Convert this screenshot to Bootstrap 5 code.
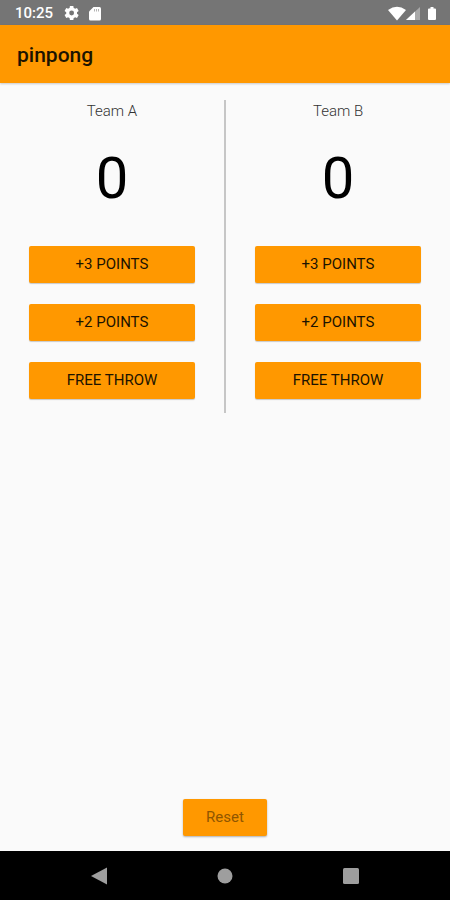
<!DOCTYPE html>
<html lang="en">
<head>
<meta charset="utf-8">
<meta name="viewport" content="width=device-width, initial-scale=1">
<title>pinpong</title>
<link href="https://cdn.jsdelivr.net/npm/bootstrap@5.3.0/dist/css/bootstrap.min.css" rel="stylesheet">
<style>
  body { font-family: Roboto, sans-serif; background: #fafafa; color: #000; }
  .status-bar { background: #757575; color: #fff; height: 25px; padding: 1px 14px 0 15px; font-size: 15px; font-weight: 500; line-height: 24px; }
  .status-bar svg, .sys-nav svg { display: block; }
  .app-bar { background: #ff9800; height: 58px; padding: 2px 17px 0; box-shadow: 0 1px 2px rgba(0,0,0,.2); }
  .app-title { font-size: 21px; font-weight: 500; line-height: 24px; color: #1c1300; }
  .board { padding-top: 17px; }
  .team { padding: 0 29px 14px; }
  .team-name { font-size: 15px; font-weight: 300; line-height: 22px; color: #333; }
  .score { font-size: 58px; line-height: 68px; margin: 22px 0 34px; }
  .rule { width: 2px; background: #c6c6c6; }
  .btn-score { --bs-btn-bg: #ff9800; --bs-btn-color: #1c1300; --bs-btn-border-width: 0; --bs-btn-hover-bg: #fb8c00; --bs-btn-active-bg: #f57c00; --bs-btn-border-radius: 2px; --bs-btn-font-size: 15px; --bs-btn-line-height: 21px; --bs-btn-padding-x: 23px; --bs-btn-padding-y: 8px; box-shadow: 0 1px 1px rgba(0,0,0,.2); }
  .points { gap: 21px; }
  .btn-reset { --bs-btn-color: #905600; box-shadow: 0 1px 2px rgba(0,0,0,.3); }
  .reset-row { padding-bottom: 15px; }
  .sys-nav { background: #000; height: 49px; padding: 0 20%; }
  .nav-key { --bs-btn-padding-x: 0; --bs-btn-padding-y: 0; --bs-btn-border-width: 0; }
</style>
<script src="https://cdn.jsdelivr.net/npm/bootstrap@5.3.0/dist/js/bootstrap.bundle.min.js"></script>
</head>
<body class="d-flex flex-column min-vh-100">
  <div class="status-bar d-flex align-items-center">
    <span>10:25</span>
    <svg class="ms-2" width="20" height="16" viewBox="-3 0 24 19" fill="#fff" aria-hidden="true"><path fill-rule="evenodd" d="M16.2 10.5a7 7 0 0 0 0-2l2-1.500-2-3.500-2.300 1a7 7 0 0 0-1.700-1L11.800 1H7.700L7.300 3.500a7 7 0 0 0-1.700 1l-2.300-1-2 3.500 2 1.500a7 7 0 0 0 0 2l-2 1.500 2 3.500 2.300-1a7 7 0 0 0 1.700 1l.4 2.500h4.100l.4-2.500a7 7 0 0 0 1.700-1l2.300 1 2-3.500zM9.750 12.400a2.900 2.900 0 1 1 0-5.800 2.900 2.900 0 0 1 0 5.800z"/></svg>
    <svg class="ms-2" width="12" height="15" viewBox="0 0 12 15" aria-hidden="true"><path fill="#fff" d="M4.500 1H10.500Q12 1 12 2.500V13Q12 14.500 10.500 14.500H1.500Q0 14.500 0 13V5.500z"/><path stroke="#b5b5b5" d="M5.500 3v2.500M7.500 3v2.500M9.500 3v2.500"/></svg>
    <div class="d-flex align-items-center ms-auto">
      <svg width="18" height="15" viewBox="0 0 18 15" fill="#fff" aria-hidden="true"><path d="M0 4Q9-2.600 18 4L9 14.500z"/></svg>
      <svg width="14" height="15" viewBox="0 0 14 15" aria-hidden="true"><path fill="#a9a9a9" d="M14 1v13H0z"/><path fill="#fff" d="M9 5.600V14H0z"/></svg>
      <svg class="ms-2" width="8" height="15" viewBox="0 0 8 15" fill="#fff" aria-hidden="true"><path d="M2.500 1h3v1.500H7q1 0 1 1V13q0 1-1 1H1q-1 0-1-1V3.500q0-1 1-1h1.500z"/></svg>
    </div>
  </div>
  <header class="app-bar d-flex align-items-center">
    <h1 class="app-title mb-0">pinpong</h1>
  </header>
  <main class="flex-grow-1 d-flex flex-column justify-content-between">
    <div class="board d-flex">
      <section class="team flex-fill text-center">
        <h2 class="team-name mb-0">Team A</h2>
        <div class="score">0</div>
        <div class="points d-grid">
          <button type="button" class="btn btn-score">+3 POINTS</button>
          <button type="button" class="btn btn-score">+2 POINTS</button>
          <button type="button" class="btn btn-score">FREE THROW</button>
        </div>
      </section>
      <div class="rule"></div>
      <section class="team flex-fill text-center">
        <h2 class="team-name mb-0">Team B</h2>
        <div class="score">0</div>
        <div class="points d-grid">
          <button type="button" class="btn btn-score">+3 POINTS</button>
          <button type="button" class="btn btn-score">+2 POINTS</button>
          <button type="button" class="btn btn-score">FREE THROW</button>
        </div>
      </section>
    </div>
    <div class="reset-row text-center">
      <button type="button" class="btn btn-score btn-reset">Reset</button>
    </div>
  </main>
  <nav class="sys-nav d-flex align-items-center justify-content-between" aria-label="System">
    <button type="button" class="btn nav-key" aria-label="Back"><svg width="18" height="18" viewBox="0 0 18 18"><path fill="#9e9e9e" d="M1 9 17 0.500v17z"/></svg></button>
    <button type="button" class="btn nav-key" aria-label="Home"><svg width="18" height="18" viewBox="0 0 18 18"><circle cx="9" cy="9" r="7.500" fill="#9e9e9e"/></svg></button>
    <button type="button" class="btn nav-key" aria-label="Recent apps"><svg width="18" height="18" viewBox="0 0 18 18"><rect x="1" y="1" width="16" height="16" rx="1.500" fill="#9e9e9e"/></svg></button>
  </nav>
</body>
</html>
